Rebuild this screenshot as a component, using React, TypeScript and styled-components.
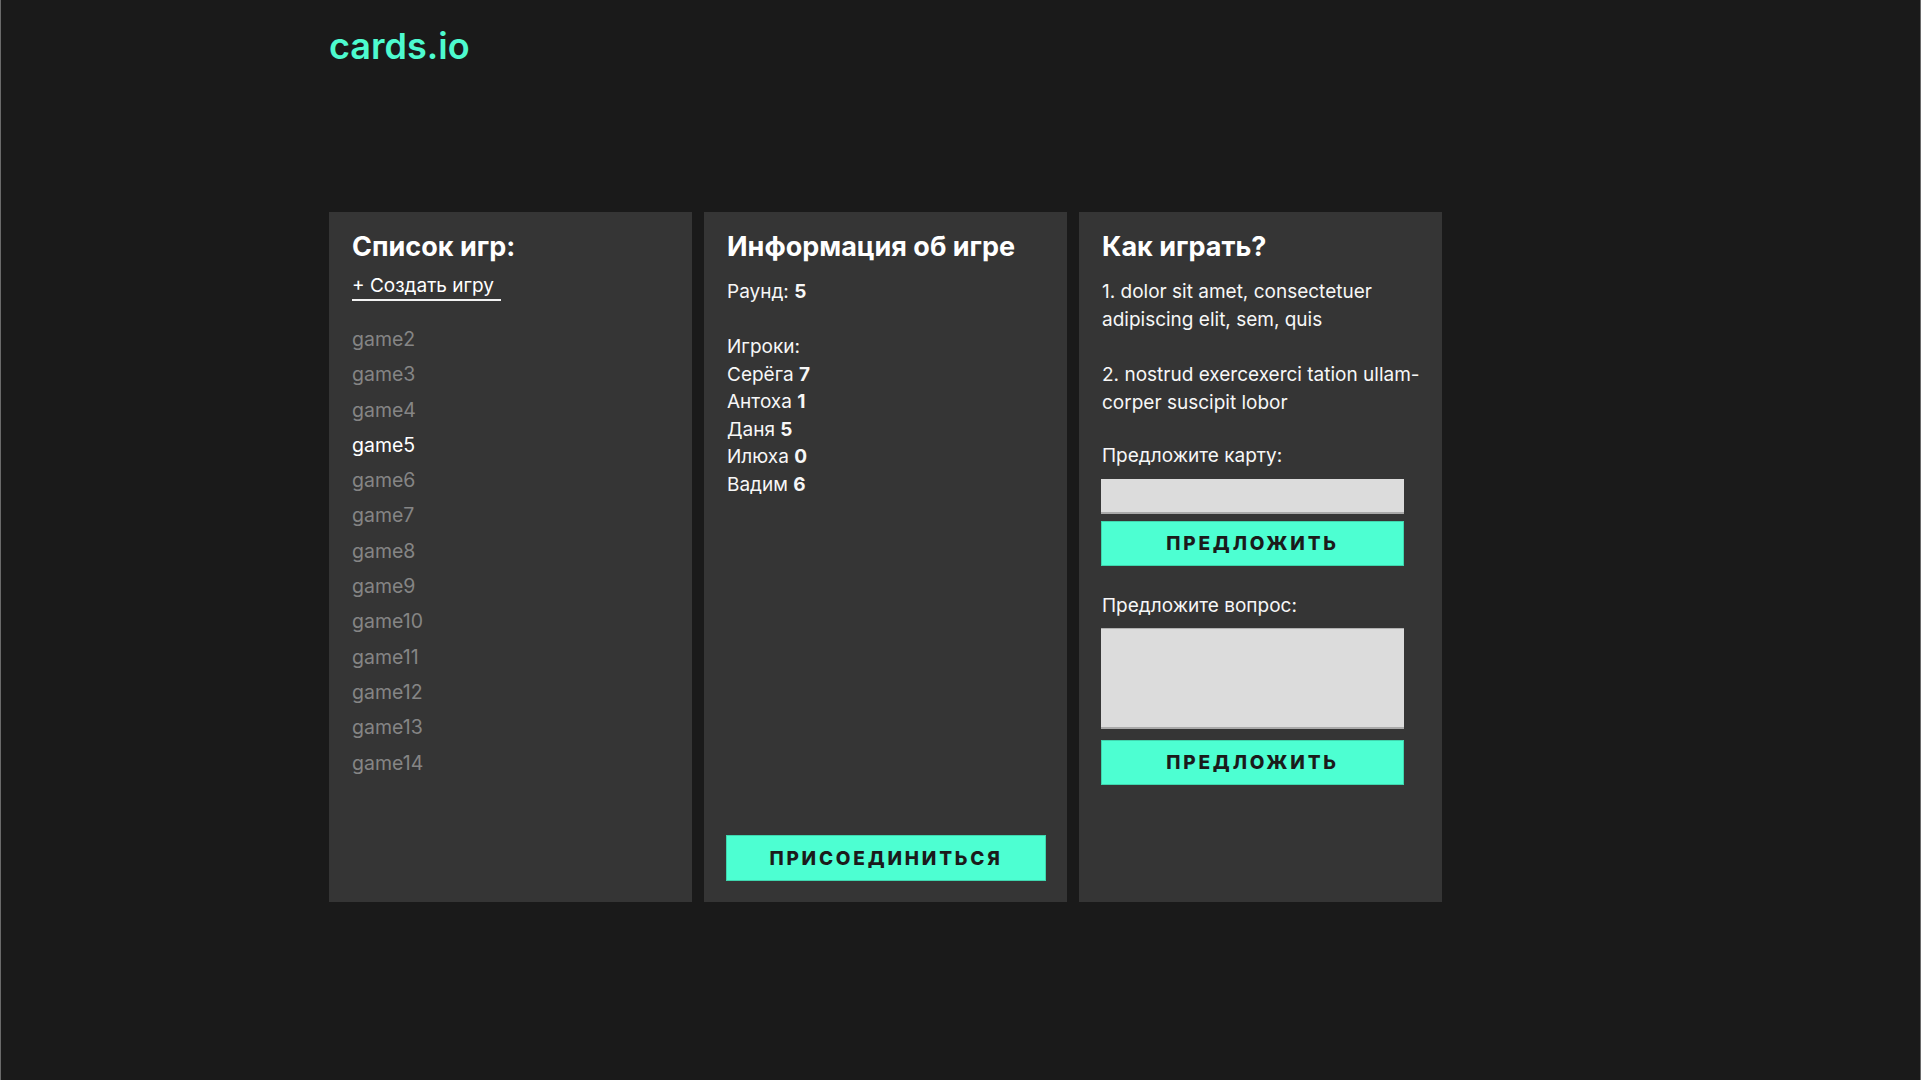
import React from 'react';
import { createGlobalStyle, styled } from 'styled-components';

const GlobalStyle = createGlobalStyle`
  html, body {
    margin: 0;
    padding: 0;
    background: #1a1a1a;
  }
  body {
    font-family: Inter, "Noto Sans", sans-serif;
    color: #f7f7f7;
  }
  * {
    box-sizing: border-box;
  }
`;

const games = [
  'game2',
  'game3',
  'game4',
  'game5',
  'game6',
  'game7',
  'game8',
  'game9',
  'game10',
  'game11',
  'game12',
  'game13',
  'game14',
];

const players = [
  { name: 'Серёга', score: 7 },
  { name: 'Антоха', score: 1 },
  { name: 'Даня', score: 5 },
  { name: 'Илюха', score: 0 },
  { name: 'Вадим', score: 6 },
];

export default function App(): JSX.Element {
  return (
    <Page>
      <GlobalStyle />
      <Container>
        <Header>
          <Logo>cards.io</Logo>
        </Header>

        <Columns>
          <Panel>
            <PanelTitle>Список игр:</PanelTitle>
            <CreateLink href="#">+ Создать игру</CreateLink>
            <GameList>
              {games.map((game) => (
                <GameItem key={game} $isActive={game === 'game5'}>
                  {game}
                </GameItem>
              ))}
            </GameList>
          </Panel>

          <Panel>
            <PanelTitle>Информация об игре</PanelTitle>
            <InfoBlock>
              <Line $gapAfter>
                Раунд: <b>5</b>
              </Line>
              <Line>Игроки:</Line>
              {players.map((p) => (
                <Line key={p.name}>
                  {p.name} <b>{p.score}</b>
                </Line>
              ))}
            </InfoBlock>
            <JoinButton>Присоединиться</JoinButton>
          </Panel>

          <Panel>
            <PanelTitle>Как играть?</PanelTitle>
            <Rule>
              1. dolor sit amet, consectetuer
              <br />
              adipiscing elit, sem, quis
            </Rule>
            <Rule>
              2. nostrud exercexerci tation ullam-
              <br />
              corper suscipit lobor
            </Rule>

            <FieldLabel $top={25}>Предложите карту:</FieldLabel>
            <CardInput type="text" />
            <SubmitButton $top={7}>Предложить</SubmitButton>

            <FieldLabel $top={26}>Предложите вопрос:</FieldLabel>
            <QuestionInput />
            <SubmitButton $top={11}>Предложить</SubmitButton>
          </Panel>
        </Columns>
      </Container>
    </Page>
  );
}

const Page = styled.div`
  min-height: 1080px;
  background: #1a1a1a;
  border-left: 1px solid #6a6a6a;
  border-right: 1px solid #6a6a6a;
`;

const Container = styled.div`
  width: 1263px;
  margin: 0 auto;
`;

const Header = styled.header`
  height: 212px;
  padding-top: 24px;
`;

const Logo = styled.div`
  font-family: Inter, sans-serif;
  font-size: 36px;
  font-weight: 600;
  line-height: 44px;
  color: #4dfbcf;
`;

const Columns = styled.div`
  display: grid;
  grid-template-columns: repeat(3, 363px);
  gap: 12px;
`;

const Panel = styled.section`
  height: 690px;
  background: #353535;
  padding: 19px 22px 21px 23px;
  display: flex;
  flex-direction: column;
`;

const PanelTitle = styled.h2`
  margin: 0;
  font-size: 27px;
  font-weight: 700;
  line-height: 32px;
  color: #fff;
`;

const CreateLink = styled.a`
  align-self: flex-start;
  margin-top: 10px;
  padding-right: 7px;
  font-size: 19px;
  line-height: 26px;
  color: #fff;
  text-decoration: none;
  border-bottom: 2px solid #f2f2f2;
`;

const GameList = styled.ul`
  list-style: none;
  margin: 21px 0 0;
  padding: 0;
`;

const GameItem = styled.li<{ $isActive: boolean }>`
  font-size: 19.5px;
  line-height: 35.3px;
  color: ${({ $isActive }) => ($isActive ? '#ffffff' : '#858585')};
  cursor: pointer;
`;

const InfoBlock = styled.div`
  margin-top: 15px;
`;

const Line = styled.div<{ $gapAfter?: boolean }>`
  font-size: 19px;
  line-height: 27.5px;
  margin-bottom: ${({ $gapAfter }) => ($gapAfter ? '27.5px' : '0')};

  b {
    font-weight: 700;
  }
`;

const Rule = styled.p`
  margin: 15px 0 0;
  font-size: 19px;
  line-height: 28px;

  & + & {
    margin-top: 27px;
  }
`;

const FieldLabel = styled.div<{ $top: number }>`
  margin-top: ${({ $top }) => $top}px;
  font-size: 19px;
  line-height: 28px;
`;

const CardInput = styled.input`
  display: block;
  width: 303px;
  height: 35px;
  margin-top: 9px;
  margin-left: -1px;
  border: none;
  border-bottom: 2px solid #a9a9a9;
  background: #dcdcdc;
  outline: none;
  font-size: 18px;
  padding: 0 10px;
`;

const QuestionInput = styled.textarea`
  display: block;
  width: 303px;
  height: 101px;
  margin-top: 8px;
  margin-left: -1px;
  border: none;
  border-top: 1px solid #b0b0b0;
  border-bottom: 2px solid #a9a9a9;
  background: #dcdcdc;
  outline: none;
  resize: none;
  font-size: 18px;
  padding: 8px 10px;
`;

const BaseButton = styled.button`
  display: block;
  border: 1px solid #3fd6ae;
  background: #4dffd2;
  color: #1b1b1b;
  font-family: Inter, sans-serif;
  font-size: 19px;
  font-weight: 800;
  letter-spacing: 2.8px;
  text-transform: uppercase;
  cursor: pointer;
`;

const SubmitButton = styled(BaseButton)<{ $top: number }>`
  width: 303px;
  height: 45px;
  margin-top: ${({ $top }) => $top}px;
  margin-left: -1px;
`;

const JoinButton = styled(BaseButton)`
  width: 320px;
  height: 46px;
  margin-top: auto;
  margin-left: -1px;
`;
